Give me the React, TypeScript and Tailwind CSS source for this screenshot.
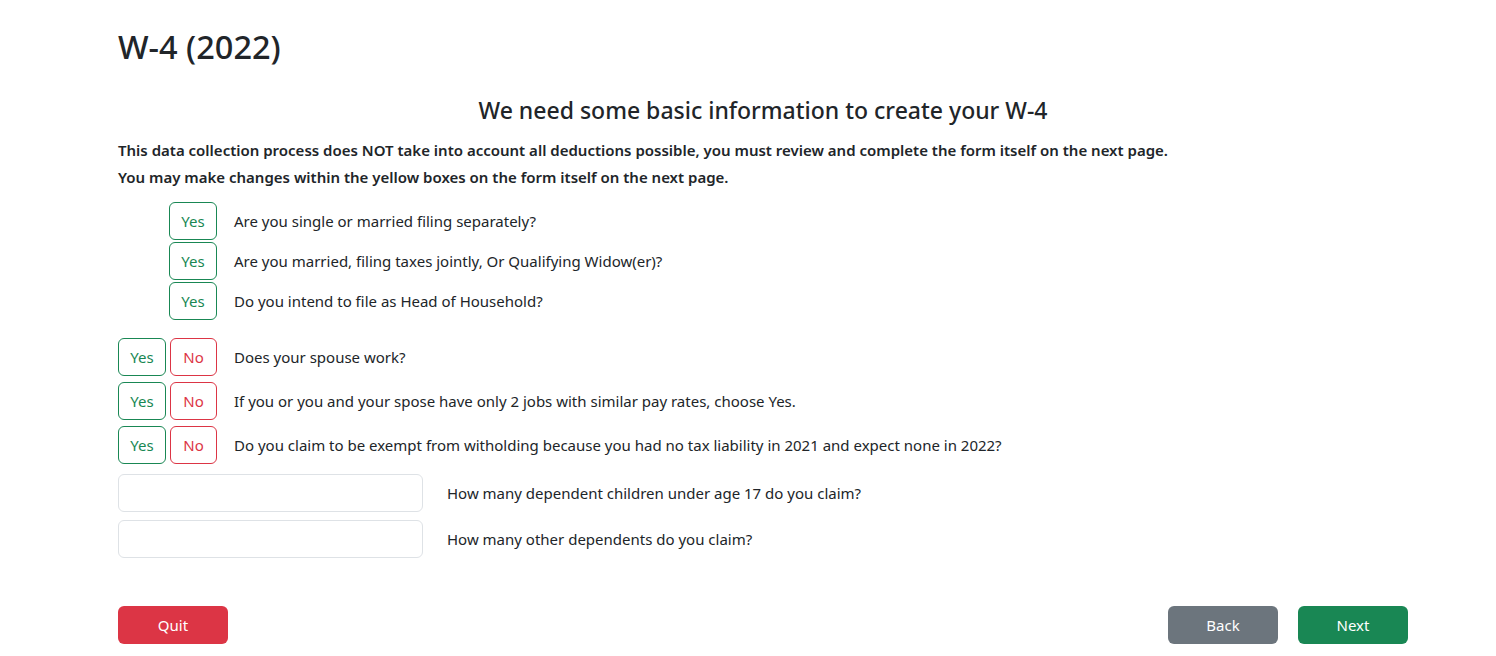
import { useState } from 'react'

const font = { fontFamily: '"Noto Sans", "Open Sans", sans-serif' }

type Answer = 'yes' | 'no' | null

function YesButton({ active, onClick }: { active: boolean; onClick: () => void }) {
  return (
    <button
      onClick={onClick}
      className={`h-[38px] w-[48px] rounded-[6px] border border-[#198754] text-[15px] ${
        active ? 'bg-[#198754] text-white' : 'bg-white text-[#198754]'
      }`}
    >
      Yes
    </button>
  )
}

function NoButton({ active, onClick }: { active: boolean; onClick: () => void }) {
  return (
    <button
      onClick={onClick}
      className={`h-[38px] w-[47px] rounded-[6px] border border-[#dc3545] text-[15px] ${
        active ? 'bg-[#dc3545] text-white' : 'bg-white text-[#dc3545]'
      }`}
    >
      No
    </button>
  )
}

const statusQuestions = [
  'Are you single or married filing separately?',
  'Are you married, filing taxes jointly, Or Qualifying Widow(er)?',
  'Do you intend to file as Head of Household?',
]

const yesNoQuestions = [
  'Does your spouse work?',
  'If you or you and your spose have only 2 jobs with similar pay rates, choose Yes.',
  'Do you claim to be exempt from witholding because you had no tax liability in 2021 and expect none in 2022?',
]

export default function App() {
  const [status, setStatus] = useState<number | null>(null)
  const [answers, setAnswers] = useState<Answer[]>([null, null, null])
  const [children, setChildren] = useState('')
  const [others, setOthers] = useState('')

  const setAnswer = (i: number, a: Answer) => {
    const next = [...answers]
    next[i] = a
    setAnswers(next)
  }

  return (
    <div className="min-h-[656px] bg-white text-[#212529]" style={font}>
      <div className="ml-[118px] w-[1290px] pt-[27px]">
        <h1 className="h-[40px] text-[32.5px] font-medium leading-[40px]">W-4 (2022)</h1>

        <h4 className="mt-[28px] h-[30px] text-center text-[23px] font-medium leading-[30px]">
          We need some basic information to create your W-4
        </h4>

        <div className="mt-[12px] text-[15px] font-semibold leading-[27px]">
          <p>
            This data collection process does NOT take into account all deductions possible, you must
            review and complete the form itself on the next page.
          </p>
          <p>You may make changes within the yellow boxes on the form itself on the next page.</p>
        </div>

        <div className="mt-[11px] flex flex-col gap-[2px]">
          {statusQuestions.map((q, i) => (
            <div key={q} className="flex items-center">
              <div className="flex w-[99px] justify-end">
                <YesButton active={status === i} onClick={() => setStatus(i)} />
              </div>
              <span className="ml-[17px] text-[15px]">{q}</span>
            </div>
          ))}
        </div>

        <div className="mt-[18px] flex flex-col gap-[6px]">
          {yesNoQuestions.map((q, i) => (
            <div key={q} className="flex items-center">
              <div className="flex w-[99px] justify-between">
                <YesButton active={answers[i] === 'yes'} onClick={() => setAnswer(i, 'yes')} />
                <NoButton active={answers[i] === 'no'} onClick={() => setAnswer(i, 'no')} />
              </div>
              <span className="ml-[17px] text-[15px]">{q}</span>
            </div>
          ))}
        </div>

        <div className="mt-[10px] flex flex-col gap-[8px]">
          <div className="flex items-center">
            <input
              value={children}
              onChange={(e) => setChildren(e.target.value)}
              className="h-[38px] w-[305px] rounded-[6px] border border-[#dee2e6] px-3 text-[15px] outline-none"
            />
            <span className="ml-[24px] text-[15px]">How many dependent children under age 17 do you claim?</span>
          </div>
          <div className="flex items-center">
            <input
              value={others}
              onChange={(e) => setOthers(e.target.value)}
              className="h-[38px] w-[305px] rounded-[6px] border border-[#dee2e6] px-3 text-[15px] outline-none"
            />
            <span className="ml-[24px] text-[15px]">How many other dependents do you claim?</span>
          </div>
        </div>

        <div className="mt-[48px] flex items-center">
          <button className="h-[38px] w-[110px] rounded-[6px] bg-[#dc3545] text-[15px] text-white">Quit</button>
          <div className="ml-auto flex gap-[20px]">
            <button className="h-[38px] w-[110px] rounded-[6px] bg-[#6c757d] text-[15px] text-white">Back</button>
            <button className="h-[38px] w-[110px] rounded-[6px] bg-[#198754] text-[15px] text-white">Next</button>
          </div>
        </div>
      </div>
    </div>
  )
}
